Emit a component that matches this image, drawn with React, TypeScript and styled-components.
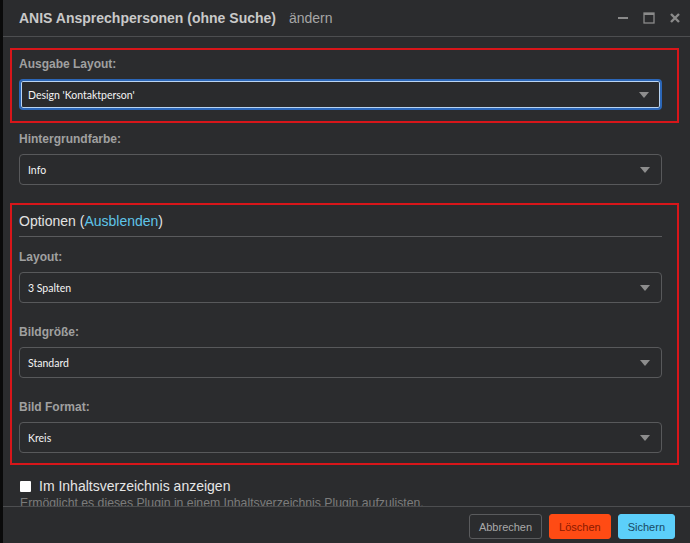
import React from 'react';
import styled, { createGlobalStyle } from 'styled-components';

const GlobalStyle = createGlobalStyle`
    html, body {
        margin: 0;
        padding: 0;
        background: #0c0c0c;
        font-family: "Liberation Sans", Arial, sans-serif;
    }
`;

const Page = styled.div`
    display: flex;
    width: 690px;
    height: 543px;
    overflow: hidden;
`;

const Backdrop = styled.div`
    width: 3px;
    background: #0a0a0a;
`;

const Dialog = styled.div`
    flex: 1;
    display: flex;
    flex-direction: column;
    background: #2b2c2e;
    overflow: hidden;
`;

const TitleBar = styled.div`
    display: flex;
    align-items: center;
    height: 36px;
    padding: 0 9px 0 16px;
    border-bottom: 1px solid #4d4e50;
    flex-shrink: 0;
`;

const Title = styled.h1`
    margin: 0;
    font-size: 14px;
    font-weight: bold;
    color: #c9c9c9;
`;

const SubTitle = styled.span`
    margin-left: 13px;
    font-size: 14px;
    color: #a6a6a6;
`;

const WindowButtons = styled.div`
    margin-left: auto;
    display: flex;
    align-items: center;
    gap: 14px;
`;

const Body = styled.div`
    flex: 1;
    overflow: hidden;
    padding: 11px 28px 0 16px;
`;

const Highlight = styled.div<{ $top?: number; $bottom?: number }>`
    margin: 0 -17px 0 -9px;
    padding: ${p => p.$top ?? 5}px 15px ${p => p.$bottom ?? 10}px 7px;
    border: 2px solid #d8161a;
`;

const Field = styled.div<{ $gap?: number; $top?: number }>`
    margin-top: ${p => p.$top ?? 0}px;
    margin-bottom: ${p => p.$gap ?? 20}px;
`;

const Label = styled.label`
    display: block;
    height: 18px;
    line-height: 18px;
    margin-bottom: 6px;
    font-size: 12px;
    font-weight: bold;
    color: #a0a0a0;
`;

const SelectBox = styled.div<{ $focused?: boolean }>`
    display: flex;
    align-items: center;
    height: 31px;
    box-sizing: border-box;
    padding: 0 11px 0 8px;
    border-radius: 4px;
    background: #2a2b2d;
    border: ${p => (p.$focused ? '2px solid #2c67b8' : '1px solid #58595b')};
    box-shadow: ${p => (p.$focused ? 'inset 0 0 0 1px #b9d4f3' : 'none')};
    padding-left: ${p => (p.$focused ? 7 : 8)}px;
    font-family: Lato, "Open Sans", sans-serif;
    font-size: 10.5px;
    color: #f4f4f4;
`;

const SelectValue = styled.span`
    flex: 1;
`;

const Arrow = styled.span`
    width: 0;
    height: 0;
    border-left: 5px solid transparent;
    border-right: 5px solid transparent;
    border-top: 6px solid #8d8d8d;
`;

const SectionTitle = styled.h2`
    margin: 0;
    padding-bottom: 5px;
    line-height: 20px;
    font-size: 14px;
    font-weight: normal;
    color: #e2e2e2;
    border-bottom: 1px solid #5a5b5d;
    margin-bottom: 11px;
`;

const Link = styled.a`
    color: #5fc4e8;
    text-decoration: none;
`;

const CheckRow = styled.label`
    display: flex;
    align-items: center;
    gap: 8px;
    margin: 13px 0 0 1px;
    font-size: 14px;
    color: #e6e6e6;
`;

const CheckMark = styled.span`
    width: 11px;
    height: 11px;
    background: #fff;
    border-radius: 1px;
`;

const Help = styled.p`
    margin: 2px 0 0 1px;
    font-size: 12.25px;
    color: #7c7c7c;
    white-space: nowrap;
`;

const Footer = styled.div`
    height: 37px;
    flex-shrink: 0;
    box-sizing: border-box;
    display: flex;
    justify-content: flex-end;
    align-items: center;
    gap: 7px;
    padding: 3px 15px 0 0;
    border-top: 1px solid #4d4e50;
`;

const Button = styled.button<{ $variant?: 'default' | 'danger' | 'primary' }>`
    height: 25px;
    padding: 0 9px;
    border-radius: 3px;
    font-family: "Liberation Sans", Arial, sans-serif;
    font-size: 11px;
    border: 1px solid ${p => (p.$variant === 'danger' ? '#ff4b14' : p.$variant === 'primary' ? '#5ccffa' : '#5a5b5d')};
    background: ${p => (p.$variant === 'danger' ? '#ff4b14' : p.$variant === 'primary' ? '#5ccffa' : 'transparent')};
    color: ${p => (p.$variant === 'danger' ? '#8a1a00' : p.$variant === 'primary' ? '#184a63' : '#a9a9a9')};
`;

function Select(props: { value: string; focused?: boolean }) {
    return (
        <SelectBox $focused={props.focused}>
            <SelectValue>{props.value}</SelectValue>
            <Arrow />
        </SelectBox>
    );
}

export default function App() {
    return (
        <Page>
            <GlobalStyle />
            <Backdrop />
            <Dialog>
                <TitleBar>
                    <Title>ANIS Ansprechpersonen (ohne Suche)</Title>
                    <SubTitle>ändern</SubTitle>
                    <WindowButtons>
                        <svg width="12" height="12" viewBox="0 0 12 12">
                            <rect x="1" y="5" width="10" height="2" fill="#8a8a8a" />
                        </svg>
                        <svg width="12" height="12" viewBox="0 0 12 12">
                            <rect x="1" y="1" width="10" height="10" fill="none" stroke="#8a8a8a" strokeWidth="1.3" />
                            <rect x="1" y="1" width="10" height="2" fill="#8a8a8a" />
                        </svg>
                        <svg width="12" height="12" viewBox="0 0 12 12">
                            <path d="M2 2 L10 10 M10 2 L2 10" stroke="#8a8a8a" strokeWidth="2.4" />
                        </svg>
                    </WindowButtons>
                </TitleBar>
                <Body>
                    <Highlight $top={5} $bottom={11}>
                        <Field $gap={0}>
                            <Label>Ausgabe Layout:</Label>
                            <Select value="Design 'Kontaktperson'" focused />
                        </Field>
                    </Highlight>
                    <Field $gap={18} $top={7}>
                        <Label>Hintergrundfarbe:</Label>
                        <Select value="Info" />
                    </Field>
                    <Highlight $top={6} $bottom={10}>
                        <SectionTitle>
                            Optionen (<Link href="#">Ausblenden</Link>)
                        </SectionTitle>
                        <Field>
                            <Label>Layout:</Label>
                            <Select value="3 Spalten" />
                        </Field>
                        <Field>
                            <Label>Bildgröße:</Label>
                            <Select value="Standard" />
                        </Field>
                        <Field $gap={0}>
                            <Label>Bild Format:</Label>
                            <Select value="Kreis" />
                        </Field>
                    </Highlight>
                    <CheckRow>
                        <CheckMark />
                        Im Inhaltsverzeichnis anzeigen
                    </CheckRow>
                    <Help>Ermöglicht es dieses Plugin in einem Inhaltsverzeichnis Plugin aufzulisten.</Help>
                </Body>
                <Footer>
                    <Button>Abbrechen</Button>
                    <Button $variant="danger">Löschen</Button>
                    <Button $variant="primary">Sichern</Button>
                </Footer>
            </Dialog>
        </Page>
    );
}
